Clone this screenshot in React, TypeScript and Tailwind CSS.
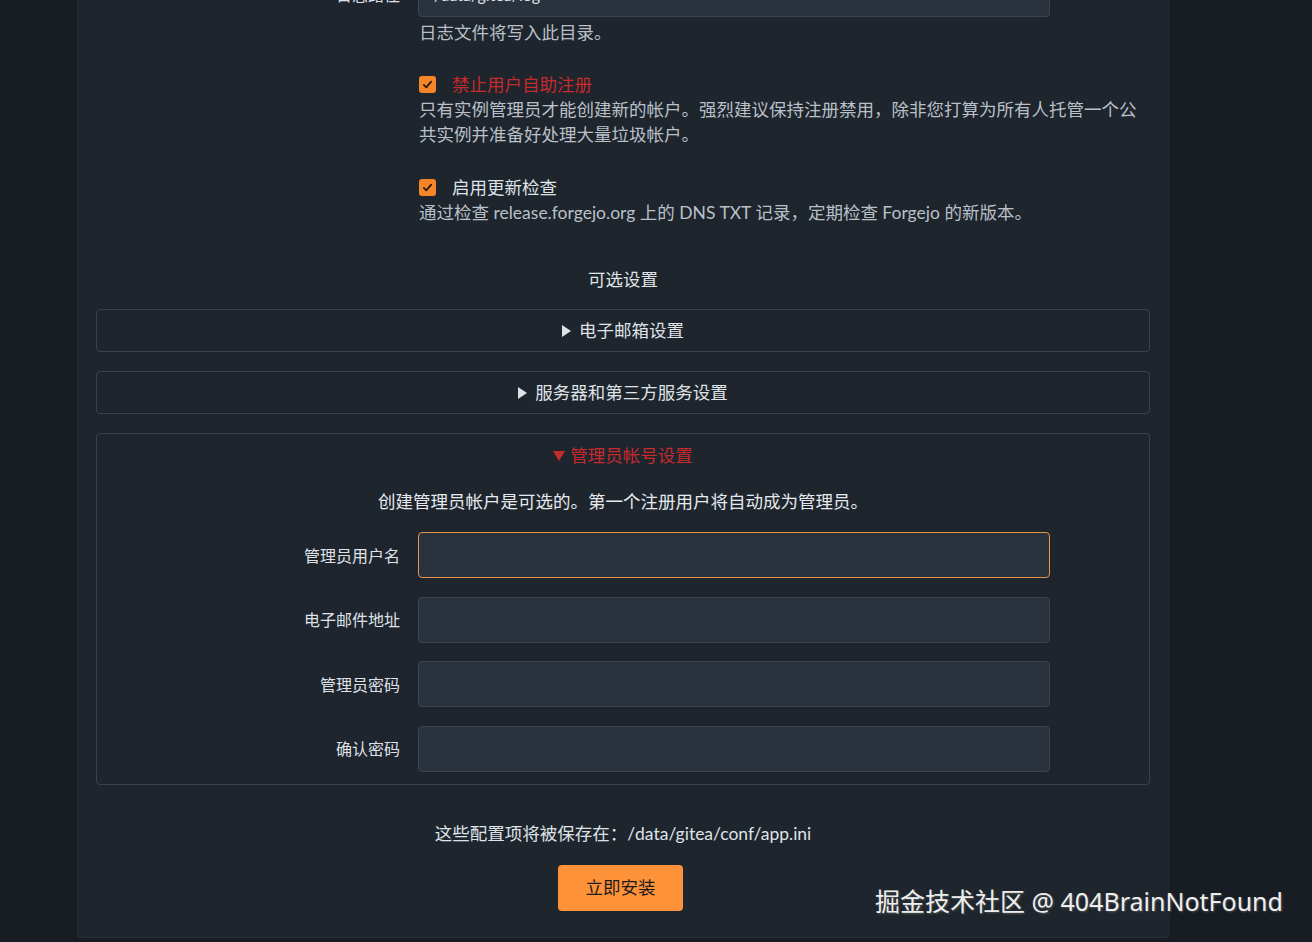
import React from 'react';

const font = { fontFamily: 'Lato, "Noto Sans CJK SC", sans-serif' };

function Check() {
  return (
    <span className="flex h-[17px] w-[17px] shrink-0 items-center justify-center rounded-[3px] bg-[#f7862b]">
      <svg viewBox="0 0 16 16" className="h-[13px] w-[13px]">
        <path d="M3.5 8.5l3 3 6-7" fill="none" stroke="#2a1a0c" strokeWidth="2.2" strokeLinecap="round" strokeLinejoin="round" />
      </svg>
    </span>
  );
}

function Triangle({ open }: { open?: boolean }) {
  if (open) {
    return (
      <svg viewBox="0 0 12 10" className="mr-[5px] h-[10px] w-[12px]">
        <path d="M0 0h12L6 10z" fill="#c52a2c" />
      </svg>
    );
  }
  return (
    <svg viewBox="0 0 9 12" className="mr-[8px] h-[12px] w-[9px]">
      <path d="M0 0l9 6-9 6z" fill="#dfe3e8" />
    </svg>
  );
}

function Field({ label, focused }: { label: string; focused?: boolean }) {
  return (
    <div className="flex items-center">
      <label className="w-[303px] shrink-0 text-right text-[16px] text-[#dfe3e8]">{label}</label>
      <input
        type="text"
        className={
          'ml-[18px] h-[46px] w-[632px] rounded-[4px] border bg-[#2a333d] px-3 text-[16px] text-[#dfe3e8] outline-none ' +
          (focused ? 'border-[#e8954b]' : 'border-[#3b4450]')
        }
      />
    </div>
  );
}

function Collapsed({ title }: { title: string }) {
  return (
    <div className="flex h-[43px] items-center justify-center rounded-[4px] border border-[#3a424c] text-[17.5px] text-[#dfe3e8]">
      <Triangle />
      <span>{title}</span>
    </div>
  );
}

export default function App() {
  return (
    <div className="relative h-[942px] overflow-hidden bg-[#181d24]" style={font}>
      <div className="ml-[77px] w-[1093px] rounded-b-[4px] border-b border-l border-[#262d36] bg-[#1e252d] pb-[26px] pl-[18px] pr-[20px] leading-[25px]">
        {/* log path row, mostly scrolled off */}
        <div className="-mt-[29px] flex items-center">
          <label className="w-[304px] shrink-0 text-right text-[16px] text-[#dfe3e8]">日志路径</label>
          <div className="ml-[18px] flex h-[46px] w-[632px] items-center rounded-[4px] border border-[#3b4450] bg-[#2a333d] px-[15px] text-[16px] text-[#dfe3e8]">
            /data/gitea/log
          </div>
        </div>
        <div className="ml-[323px] mt-[3px] text-[17.5px] text-[#b9c0c8]">日志文件将写入此目录。</div>

        <div className="ml-[323px] mt-[27px] flex items-center">
          <Check />
          <span className="ml-[16px] text-[17.5px] text-[#c52a2c]">禁止用户自助注册</span>
        </div>
        <div className="ml-[323px] text-[17.5px] text-[#b9c0c8]">
          只有实例管理员才能创建新的帐户。强烈建议保持注册禁用，除非您打算为所有人托管一个公共实例并准备好处理大量垃圾帐户。
        </div>

        <div className="ml-[323px] mt-[28px] flex items-center">
          <Check />
          <span className="ml-[16px] text-[17.5px] text-[#dfe3e8]">启用更新检查</span>
        </div>
        <div className="ml-[323px] text-[17.5px] text-[#b9c0c8]">
          通过检查 release.forgejo.org 上的 DNS TXT 记录，定期检查 Forgejo 的新版本。
        </div>

        <div className="mt-[42px] text-center text-[17.5px] text-[#dfe3e8]">可选设置</div>

        <div className="mt-[17px] flex flex-col gap-[19px]">
          <Collapsed title="电子邮箱设置" />
          <Collapsed title="服务器和第三方服务设置" />
          <div className="rounded-[4px] border border-[#3a424c] pb-[12px] pt-[9px]">
            <div className="flex items-center justify-center text-[17.5px] text-[#c52a2c]">
              <Triangle open />
              <span>管理员帐号设置</span>
            </div>
            <div className="mt-[21px] text-center text-[17.5px] text-[#e6eaee]">
              创建管理员帐户是可选的。第一个注册用户将自动成为管理员。
            </div>
            <div className="mt-[18px] flex flex-col gap-[18.5px]">
              <Field label="管理员用户名" focused />
              <Field label="电子邮件地址" />
              <Field label="管理员密码" />
              <Field label="确认密码" />
            </div>
          </div>
        </div>

        <div className="mt-[36px] text-center text-[17.5px] text-[#dfe3e8]">这些配置项将被保存在：/data/gitea/conf/app.ini</div>
        <div className="mt-[19px] flex justify-center">
          <button className="mr-[5px] h-[46px] w-[125px] rounded-[4px] bg-[#fd9239] text-[17.5px] text-[#1b1b1b]">立即安装</button>
        </div>
      </div>

      <div className="absolute left-[875px] top-[883px] font-['Noto_Sans','Noto_Sans_CJK_SC',sans-serif] text-[25px] leading-[36px] text-[#eeeeee] [text-shadow:1px_1px_2px_#555]">
        掘金技术社区 @ 404BrainNotFound
      </div>
    </div>
  );
}
